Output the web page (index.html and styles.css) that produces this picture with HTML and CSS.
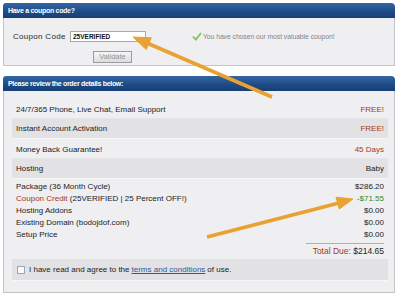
FILE: index.html
```html
<!DOCTYPE html>
<html>
<head>
<meta charset="utf-8">
<link rel="stylesheet" href="styles.css">
</head>
<body>
<div class="page">
  <section class="panel coupon">
    <div class="head">Have a coupon code?</div>
    <div class="body">
      <div class="coupon-row">
        <span class="label">Coupon Code</span>
        <span class="input">25VERIFIED</span>
        <span class="msg"><svg class="check" width="10" height="9" viewBox="0 0 10 9"><polyline points="1,4.5 3.8,7.5 9,1" fill="none" stroke="#7cc35a" stroke-width="1.8"/></svg>You have chosen our most valuable coupon!</span>
      </div>
      <div class="btn-row"><span class="btn">Validate</span></div>
    </div>
  </section>

  <section class="panel review">
    <div class="head">Please review the order details below:</div>
    <div class="body">
      <div class="row"><span>24/7/365 Phone, Live Chat, Email Support</span><span class="red">FREE!</span></div>
      <div class="row shade"><span>Instant Account Activation</span><span class="red">FREE!</span></div>
      <div class="row"><span>Money Back Guarantee!</span><span class="red">45 Days</span></div>
      <div class="row shade"><span>Hosting</span><span>Baby</span></div>
      <div class="summary">
        <ul class="items">
          <li>Package (36 Month Cycle)</li>
          <li><span class="red">Coupon Credit</span> (25VERIFIED | 25 Percent OFF!)</li>
          <li>Hosting Addons</li>
          <li>Existing Domain (bodojdof.com)</li>
          <li>Setup Price</li>
        </ul>
        <ul class="amounts">
          <li>$286.20</li>
          <li class="green">-$71.55</li>
          <li>$0.00</li>
          <li>$0.00</li>
          <li>$0.00</li>
          <li class="total"><span class="red">Total Due:</span> $214.65</li>
        </ul>
      </div>
      <div class="row shade agree"><span><span class="box"></span>I have read and agree to the <a href="#">terms and conditions</a> of use.</span></div>
    </div>
  </section>

  <svg class="arrows" width="400" height="300" viewBox="0 0 400 300">
    <g fill="#e9a133" stroke="#e9a133">
      <line x1="272" y1="97" x2="147" y2="43" stroke-width="3.6"/>
      <polygon points="133,37 146.2,49.5 151.3,37.8" stroke-width="1"/>
      <line x1="207" y1="237" x2="339" y2="203" stroke-width="3.6"/>
      <polygon points="353,199 339.3,209 336,197.2" stroke-width="1"/>
    </g>
  </svg>
</div>
</body>
</html>
```

FILE: styles.css
```css
* { box-sizing: border-box; }
html, body { margin: 0; padding: 0; background: #fff; }
body { font-family: "Liberation Sans", Arial, sans-serif; color: #222; }
.page { position: relative; width: 400px; height: 300px; padding: 3px 5px 0 3px; }
.panel { display: flex; flex-direction: column; }
.head {
  height: 15px;
  background: linear-gradient(#3466a3, #1d4a85 60%, #173f74);
  border-radius: 3px 4px 0 0;
  color: #fff;
  font-weight: bold;
  font-size: 7px;
  letter-spacing: -0.3px;
  line-height: 15px;
  padding-left: 5px;
}
.body {
  background: #efeef1;
  border: 1px solid #c4c4c6;
  border-top: none;
}
.coupon .body { height: 48px; padding: 13px 0 0 9px; }
.coupon-row { display: flex; align-items: center; height: 11px; }
.label { width: 57px; font-size: 8px; letter-spacing: 0.3px; color: #2a2a2a; }
.input {
  width: 76px; height: 11px;
  background: #fff; border: 1px solid #a8a8a8;
  font-size: 6.5px; font-weight: bold; color: #111;
  line-height: 9px; padding-left: 2px;
}
.msg { margin-left: 46px; display: flex; align-items: center; font-size: 6.8px; color: #858585; letter-spacing: -0.05px; }
.check { margin-right: 1px; }
.btn-row { padding-left: 80px; margin-top: 3px; }
.btn {
  display: inline-block; width: 39px; height: 12px;
  border: 1px solid #9c9c9c;
  background: linear-gradient(#f6f6f6, #dcdcdc);
  color: #959595; font-size: 7.5px; text-align: center; line-height: 10px;
}
.review { margin-top: 10px; }
.review .body { height: 202px; padding: 8px 6px 0 8px; }
.row {
  display: flex; justify-content: space-between; align-items: center;
  height: 20px; padding: 1px 4px 0 4px;
  font-size: 8px; color: #222;
  border-bottom: 1px solid #e6e5e8;
}
.shade { background: #e2e1e4; border-bottom: 1px solid #f7f7f8; padding-top: 0; }
.red { color: #a33a14; }
.green { color: #2e8b2e; }
.summary { display: flex; justify-content: space-between; padding: 2px 4px 0 4px; font-size: 8px; }
.summary ul { list-style: none; margin: 0; padding: 0; }
.summary li { height: 12px; line-height: 12px; }
.amounts { text-align: right; }
.amounts .total { margin-top: 2px; border-top: 1px solid #c9a797; width: 78px; height: 16px; line-height: 15px; margin-left: auto; font-size: 8.5px; }
.agree { height: 22px; justify-content: flex-start; padding-left: 5px; }
.agree > span { display: flex; align-items: center; }
.box { display: inline-block; width: 8px; height: 8px; border: 1px solid #9aa7b8; background: #fafafa; margin-right: 4px; }
.agree a { color: #2b5a94; text-decoration: underline; margin: 0 2px; }
.arrows { position: absolute; left: 0; top: 0; }
```
